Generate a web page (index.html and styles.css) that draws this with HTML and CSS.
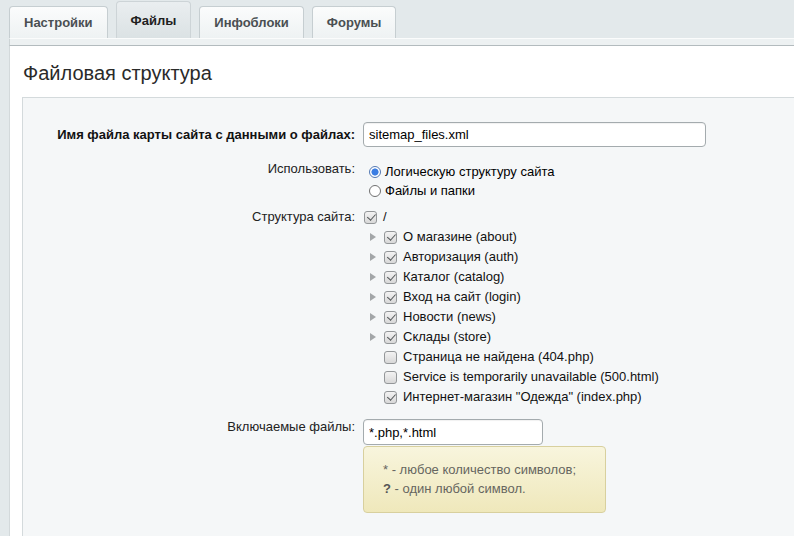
FILE: index.html
```html
<!DOCTYPE html>
<html lang="ru">
<head>
<meta charset="utf-8">
<title>Файлы</title>
<link rel="stylesheet" href="styles.css">
</head>
<body>
<div class="page">
  <div class="tabs">
    <div class="tab">Настройки</div>
    <div class="tab active">Файлы</div>
    <div class="tab">Инфоблоки</div>
    <div class="tab">Форумы</div>
  </div>
  <div class="tabs-line"></div>
  <div class="panel">
    <h1 class="title">Файловая структура</h1>
    <div class="content">
      <div class="row row-name">
        <div class="label bold">Имя файла карты сайта с данными о файлах:</div>
        <div class="value"><input class="field field-wide" type="text" value="sitemap_files.xml"></div>
      </div>

      <div class="row row-use">
        <div class="label label-short">Использовать:</div>
        <div class="value">
          <div class="opt"><span class="radio checked"></span><span>Логическую структуру сайта</span></div>
          <div class="opt"><span class="radio"></span><span>Файлы и папки</span></div>
        </div>
      </div>

      <div class="row row-struct">
        <div class="label label-tall">Структура сайта:</div>
        <div class="value">
          <div class="item root"><span class="cb checked"></span><span class="txt">/</span></div>
          <div class="item"><span class="toggle"><span class="arrow"></span></span><span class="cb checked"></span><span class="txt">О магазине (about)</span></div>
          <div class="item"><span class="toggle"><span class="arrow"></span></span><span class="cb checked"></span><span class="txt">Авторизация (auth)</span></div>
          <div class="item"><span class="toggle"><span class="arrow"></span></span><span class="cb checked"></span><span class="txt">Каталог (catalog)</span></div>
          <div class="item"><span class="toggle"><span class="arrow"></span></span><span class="cb checked"></span><span class="txt">Вход на сайт (login)</span></div>
          <div class="item"><span class="toggle"><span class="arrow"></span></span><span class="cb checked"></span><span class="txt">Новости (news)</span></div>
          <div class="item"><span class="toggle"><span class="arrow"></span></span><span class="cb checked"></span><span class="txt">Склады (store)</span></div>
          <div class="item"><span class="toggle"></span><span class="cb"></span><span class="txt">Страница не найдена (404.php)</span></div>
          <div class="item"><span class="toggle"></span><span class="cb"></span><span class="txt">Service is temporarily unavailable (500.html)</span></div>
          <div class="item"><span class="toggle"></span><span class="cb checked"></span><span class="txt">Интернет-магазин "Одежда" (index.php)</span></div>
        </div>
      </div>

      <div class="row row-files">
        <div class="label label-short">Включаемые файлы:</div>
        <div class="value">
          <input class="field field-short" type="text" value="*.php,*.html">
          <div class="hint">
            <div>* - любое количество символов;</div>
            <div><b>?</b> - один любой символ.</div>
          </div>
        </div>
      </div>
    </div>
  </div>
</div>
</body>
</html>
```

FILE: styles.css
```css
html, body {
  margin: 0;
  padding: 0;
}

body {
  background: #e3e9eb;
  font-family: "Liberation Sans", Arial, sans-serif;
  font-size: 13px;
  color: #000;
}

.page {
  min-height: 536px;
  display: flex;
  flex-direction: column;
  overflow: hidden;
}

/* Tabs */
.tabs {
  display: flex;
  align-items: flex-end;
  gap: 8px;
  padding-left: 9px;
  height: 38px;
}

.tab {
  box-sizing: border-box;
  height: 32px;
  padding: 8px 14px 0;
  line-height: 15px;
  font-weight: bold;
  color: #4a4f52;
  border: 1px solid #c6ced1;
  border-bottom: none;
  border-radius: 4px 4px 0 0;
  background: linear-gradient(#fbfcfc, #eef2f3);
}

.tab.active {
  height: 37px;
  padding-top: 11px;
  color: #1e1e1e;
  background: linear-gradient(#eaeef0, #dbe2e4);
  border-color: #cdd4d7;
}

.tabs-line {
  margin-left: 9px;
  height: 6px;
  background: #edf1f2;
  border-top: 1px solid #fbfcfc;
  border-bottom: 1px solid #b3bbbe;
  border-left: 1px solid #cdd4d6;
}

/* Panel */
.panel {
  flex: 1;
  margin-left: 9px;
  background: #fff;
  border-left: 1px solid #d3d9db;
  padding-left: 12px;
  display: flex;
  flex-direction: column;
}

.title {
  margin: 0;
  padding: 15px 0 12px 1px;
  font-size: 20px;
  line-height: 24px;
  font-weight: normal;
  color: #2a2a2a;
}

.content {
  flex: 1;
  background: #f5f7f8;
  border-top: 1px solid #d4dadc;
  border-left: 1px solid #d4dadc;
  padding-top: 24px;
}

/* Form rows */
.row {
  display: grid;
  grid-template-columns: 332px 1fr;
  column-gap: 8px;
}

.label {
  text-align: right;
  color: #222;
}

.bold {
  font-weight: bold;
  color: #111;
}

.row-name {
  align-items: center;
}

.row-use {
  margin-top: 15px;
  align-items: start;
}

.label-short {
  line-height: 15px;
}

.row-use .label {
  margin-top: -1px;
}

.row-struct {
  margin-top: 7px;
  align-items: start;
}

.label-tall {
  line-height: 20px;
}

.row-files {
  margin-top: 12px;
  align-items: start;
}

/* Inputs */
.field {
  display: block;
  box-sizing: border-box;
  margin: 0;
  border: 1px solid #a4abae;
  border-radius: 4px;
  background: #fff;
  padding: 0 5px;
  font-family: "Liberation Sans", Arial, sans-serif;
  font-size: 13px;
  color: #000;
  box-shadow: inset 0 1px 1px rgba(0, 0, 0, 0.06);
  outline: none;
}

.field-wide {
  width: 343px;
  height: 25px;
}

.field-short {
  width: 180px;
  height: 26px;
}

/* Radios */
.opt {
  display: flex;
  align-items: center;
  line-height: 19px;
  height: 19px;
}

.radio {
  box-sizing: border-box;
  width: 12px;
  height: 12px;
  margin: 0 4px 0 6px;
  border-radius: 50%;
  border: 1px solid #707070;
  background: #fff;
  flex: none;
}

.radio.checked {
  border-color: #5479b3;
  background: radial-gradient(circle, #3a7de4 0, #3c7ee2 3.2px, #fff 3.9px);
}

/* Tree */
.item {
  display: flex;
  align-items: center;
  height: 20px;
  line-height: 20px;
}

.item.root .cb {
  margin-left: 1px;
}

.toggle {
  width: 21px;
  height: 20px;
  display: flex;
  align-items: center;
  flex: none;
}

.arrow {
  width: 0;
  height: 0;
  margin-left: 7px;
  border-left: 6px solid #a3a6a8;
  border-top: 4px solid transparent;
  border-bottom: 4px solid transparent;
}

.cb {
  position: relative;
  box-sizing: border-box;
  width: 13px;
  height: 13px;
  border: 1px solid #949799;
  border-radius: 3px;
  background: linear-gradient(#f3f3f3, #d8d8d8);
  flex: none;
}

.cb.checked::after {
  content: "";
  position: absolute;
  left: 3.5px;
  top: 0.5px;
  width: 3.5px;
  height: 7px;
  border: solid #4f5355;
  border-width: 0 1.8px 1.8px 0;
  transform: rotate(42deg);
}

.txt {
  margin-left: 6px;
  color: #111;
}

/* Hint */
.hint {
  box-sizing: border-box;
  width: 243px;
  margin-top: 1px;
  padding: 13px 19px 14px;
  line-height: 19px;
  border: 1px solid #d8d09e;
  border-radius: 4px;
  background: linear-gradient(#f8f5dd, #efe8bb);
  color: #666660;
}

.hint b {
  color: #555;
}
```
